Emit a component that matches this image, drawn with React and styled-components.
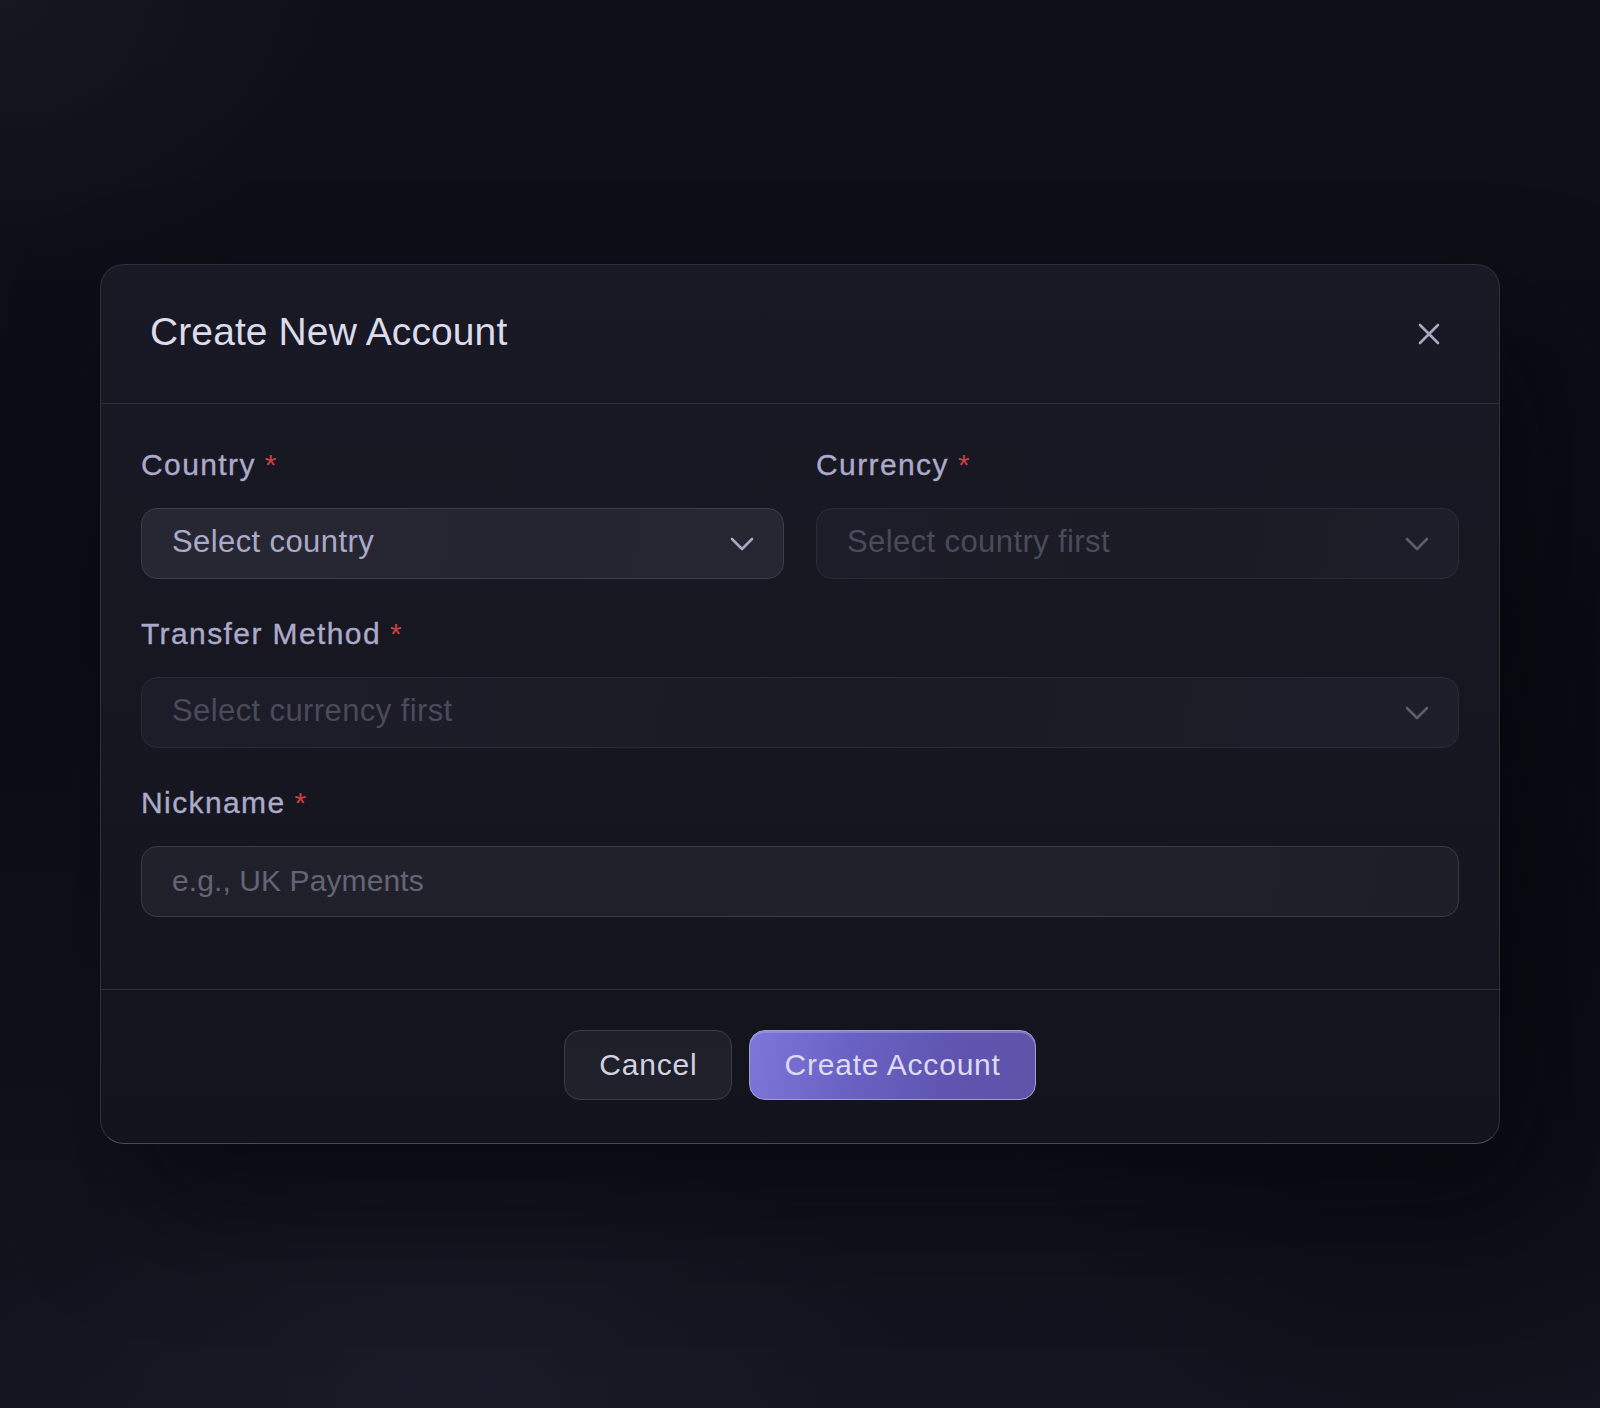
import styled, { createGlobalStyle } from "styled-components";

const GlobalStyle = createGlobalStyle`
  html, body {
    margin: 0;
    padding: 0;
  }
  body {
    background: #0e0e18;
    font-family: "Liberation Sans", Arial, sans-serif;
  }
  * {
    box-sizing: border-box;
  }
`;

const Page = styled.div`
  min-height: 1408px;
  display: flex;
  align-items: center;
  justify-content: center;
  background:
    radial-gradient(ellipse 700px 420px at 28% 100%, rgba(30, 30, 44, 0.7), transparent 70%),
    radial-gradient(ellipse 600px 700px at 88% 70%, rgba(6, 5, 12, 0.55), transparent 70%),
    radial-gradient(ellipse 500px 400px at 0% 0%, rgba(26, 26, 38, 0.7), transparent 70%),
    linear-gradient(180deg, #0f0f19 0%, #0c0c15 45%, #141420 100%);
`;

const Modal = styled.div`
  width: 1400px;
  display: flex;
  flex-direction: column;
  background: linear-gradient(180deg, #181924 0%, #151620 60%, #12131b 100%);
  border: 1.5px solid #2f303c;
  border-bottom-color: #4a4a58;
  border-radius: 24px;
  box-shadow: 40px 60px 120px rgba(4, 3, 10, 0.55);
`;

const Header = styled.div`
  display: flex;
  align-items: center;
  justify-content: space-between;
  padding: 43px 50px 49px 49px;
  border-bottom: 1.5px solid #2c2d39;
`;

const Title = styled.h2`
  margin: 0;
  font-size: 39px;
  line-height: 45px;
  font-weight: 400;
  letter-spacing: 0.1px;
  color: #dcdbea;
`;

const CloseButton = styled.button`
  display: flex;
  align-items: center;
  justify-content: center;
  width: 40px;
  height: 40px;
  margin-top: 6px;
  padding: 0;
  border: none;
  background: transparent;
  color: #a9a8c2;
  cursor: pointer;
`;

const Body = styled.div`
  display: flex;
  flex-direction: column;
  gap: 38px;
  padding: 44px 40px 72px;
`;

const Row = styled.div`
  display: grid;
  grid-template-columns: 1fr 1fr;
  gap: 32px;
`;

const Field = styled.div`
  display: flex;
  flex-direction: column;
  gap: 26px;
`;

const Label = styled.label`
  font-size: 30px;
  line-height: 34px;
  letter-spacing: 1.4px;
  color: #acaac8;
  -webkit-text-stroke: 0.35px #acaac8;
`;

const Required = styled.span`
  color: #c83f42;
  -webkit-text-stroke: 0;
  margin-left: 9px;
`;

const SelectBox = styled.div`
  height: 71px;
  display: flex;
  align-items: center;
  justify-content: space-between;
  padding: 0 29px 4px 30px;
  border-radius: 16px;
  border: 1.5px solid ${(p) => (p.$disabled ? "#2a2b37" : "#3c3d4b")};
  background: ${(p) =>
    p.$disabled
      ? "linear-gradient(100deg, #1c1d28 0%, #1a1b25 60%, #1d1e29 100%)"
      : "linear-gradient(100deg, #262733 0%, #242531 60%, #252632 100%)"};
  color: ${(p) => (p.$disabled ? "#4a4a5a" : "#aba9c8")};
  font-size: 31px;
  letter-spacing: 0.4px;
  cursor: ${(p) => (p.$disabled ? "not-allowed" : "pointer")};
`;

const Chevron = styled.svg`
  flex: none;
  margin-top: 4px;
  color: ${(p) => (p.$disabled ? "#5c5c6c" : "#a9a8c2")};
`;

const TextInput = styled.input`
  height: 71px;
  width: 100%;
  padding: 0 30px 2px;
  border-radius: 16px;
  border: 1.5px solid #393a47;
  background: linear-gradient(100deg, #1f2029 0%, #20212b 70%, #1d1e28 100%);
  color: #c8c7dc;
  font-family: "Liberation Sans", Arial, sans-serif;
  font-size: 30px;
  letter-spacing: 0.1px;
  outline: none;
  &::placeholder {
    color: #646476;
  }
`;

const Footer = styled.div`
  display: flex;
  justify-content: center;
  gap: 17px;
  padding: 40px 40px 43px;
  border-top: 1.5px solid #2c2d39;
`;

const Button = styled.button`
  height: 70px;
  padding: 0 34px;
  border-radius: 16px;
  font-family: "Liberation Sans", Arial, sans-serif;
  font-size: 30px;
  letter-spacing: 0.8px;
  cursor: pointer;
  border: 1.5px solid ${(p) => (p.$primary ? "#a29dd2" : "#3b3c49")};
  background: ${(p) =>
    p.$primary
      ? "linear-gradient(100deg, #7e77da 0%, #6a61c4 35%, #5f55b0 70%, #5d53a8 100%)"
      : "linear-gradient(180deg, #1e1f29 0%, #20212b 100%)"};
  color: ${(p) => (p.$primary ? "#dddbf1" : "#d2d1e2")};
  box-shadow: ${(p) =>
    p.$primary ? "inset 0 2px 0 rgba(190, 185, 245, 0.35)" : "none"};
`;

const ChevronIcon = ({ disabled }) => (
  <Chevron $disabled={disabled} width="24" height="14" viewBox="0 0 24 14" fill="none">
    <path
      d="M2 2l10 10 10-10"
      stroke="currentColor"
      strokeWidth="2.6"
      strokeLinecap="round"
      strokeLinejoin="round"
    />
  </Chevron>
);

const Select = ({ placeholder, disabled }) => (
  <SelectBox $disabled={disabled}>
    <span>{placeholder}</span>
    <ChevronIcon disabled={disabled} />
  </SelectBox>
);

const App = () => {
  return (
    <>
      <GlobalStyle />
      <Page>
        <Modal>
          <Header>
            <Title>Create New Account</Title>
            <CloseButton aria-label="Close">
              <svg width="22" height="22" viewBox="0 0 22 22" fill="none">
                <path
                  d="M2 2l18 18M20 2L2 20"
                  stroke="currentColor"
                  strokeWidth="2.6"
                  strokeLinecap="round"
                />
              </svg>
            </CloseButton>
          </Header>

          <Body>
            <Row>
              <Field>
                <Label>
                  Country<Required>*</Required>
                </Label>
                <Select placeholder="Select country" />
              </Field>
              <Field>
                <Label>
                  Currency<Required>*</Required>
                </Label>
                <Select placeholder="Select country first" disabled />
              </Field>
            </Row>

            <Field>
              <Label>
                Transfer Method<Required>*</Required>
              </Label>
              <Select placeholder="Select currency first" disabled />
            </Field>

            <Field>
              <Label>
                Nickname<Required>*</Required>
              </Label>
              <TextInput placeholder="e.g., UK Payments" />
            </Field>
          </Body>

          <Footer>
            <Button>Cancel</Button>
            <Button $primary>Create Account</Button>
          </Footer>
        </Modal>
      </Page>
    </>
  );
};

export default App;
